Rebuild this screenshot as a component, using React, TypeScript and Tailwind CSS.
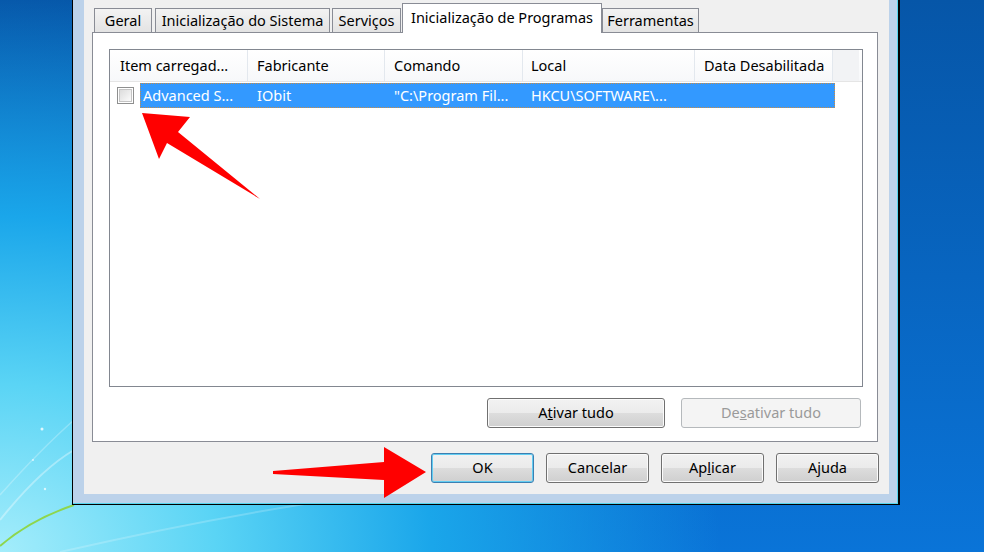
import type { ReactNode } from "react";

const uiFont = "font-['Noto_Sans',sans-serif]";

type Tab = { label: string; className: string; active?: boolean };

const tabs: Tab[] = [
  { label: "Geral", className: "ml-[2px] w-[58px]" },
  { label: "Inicialização do Sistema", className: "ml-[3px] w-[175px]" },
  { label: "Serviços", className: "ml-[2px] w-[69px]" },
  { label: "Inicialização de Programas", className: "ml-[1px] w-[200px]", active: true },
  { label: "Ferramentas", className: "w-[97px]" },
];

const columns = [
  { title: "Item carregad...", className: "w-[138px] pl-[10px]" },
  { title: "Fabricante", className: "w-[137px] pl-[9px]" },
  { title: "Comando", className: "w-[138px] pl-[9px]" },
  { title: "Local", className: "w-[172px] pl-[8px]" },
  { title: "Data Desabilitada", className: "w-[138px] pl-[9px]" },
];

function TabButton({ tab }: { tab: Tab }) {
  if (tab.active) {
    return (
      <div
        className={`${tab.className} flex h-[30px] items-center justify-center border border-b-0 border-[#898c95] bg-white pb-[2px] text-[14.5px] text-black`}
      >
        {tab.label}
      </div>
    );
  }
  return (
    <div
      className={`${tab.className} mb-px flex h-[24px] items-center justify-center border border-b-0 border-[#898c95] bg-[linear-gradient(to_bottom,#f3f3f3,#e3e3e3)] pt-[1px] text-[14.5px] text-black`}
    >
      {tab.label}
    </div>
  );
}

function WinButton({
  children,
  kind = "normal",
  className = "",
}: {
  children: ReactNode;
  kind?: "normal" | "default" | "disabled";
  className?: string;
}) {
  if (kind === "disabled") {
    return (
      <div
        className={`${className} flex h-[30px] items-center justify-center rounded-[3px] border border-[#b5b9bc] bg-[#f4f4f4] text-[14.5px] text-[#9a9a9a]`}
      >
        {children}
      </div>
    );
  }
  if (kind === "default") {
    return (
      <div
        className={`${className} flex h-[30px] items-center justify-center rounded-[3px] border border-[#3c7fb1] bg-[linear-gradient(to_bottom,#f2f2f2_0%,#ebebeb_50%,#dddddd_50%,#cfcfcf_100%)] text-[14.5px] text-black shadow-[inset_0_0_0_1px_#62cdf2]`}
      >
        {children}
      </div>
    );
  }
  return (
    <div
      className={`${className} flex h-[30px] items-center justify-center rounded-[3px] border border-[#707070] bg-[linear-gradient(to_bottom,#f2f2f2_0%,#ebebeb_50%,#dddddd_50%,#cfcfcf_100%)] text-[14.5px] text-black shadow-[inset_0_0_0_1px_#fbfbfb]`}
    >
      {children}
    </div>
  );
}

function CheckBox() {
  return (
    <div className="ml-[7px] flex h-[17px] w-[17px] items-center justify-center border border-[#8e8f8f] bg-white">
      <div className="h-[13px] w-[13px] border border-[#c4c4c4] bg-[linear-gradient(to_bottom_right,#dcdcdc,#fbfbfb)]" />
    </div>
  );
}

function StartupList() {
  return (
    <div className="h-[338px] w-[754px] border border-[#828790] bg-white">
      <div className="flex h-[32px] border-b border-[#e5e5e5] bg-[linear-gradient(to_bottom,#ffffff,#f7f8fa)]">
        {columns.map((col) => (
          <div
            key={col.title}
            className={`${col.className} flex items-center border-r border-[#e3e8ee] text-[14.5px] text-black`}
          >
            {col.title}
          </div>
        ))}
        <div className="w-[26px] bg-[#f2f3f5]" />
      </div>

      <div className="mt-[1px] flex h-[25px] items-center">
        <div className="w-[30px]">
          <CheckBox />
        </div>
        <div className="flex h-full w-[695px] items-center border border-dotted border-[#c98b45] bg-[#3399ff] text-[14.5px] text-white">
          <div className="w-[107px] pl-[2px]">Advanced S...</div>
          <div className="w-[137px] pl-[9px]">IObit</div>
          <div className="w-[138px] pl-[9px]">"C:\Program Fil...</div>
          <div className="w-[172px] pl-[8px]">HKCU\SOFTWARE\...</div>
        </div>
      </div>
    </div>
  );
}

function Desktop() {
  return (
    <svg className="absolute inset-0" width="984" height="552" viewBox="0 0 984 552">
      <path d="M0 546 Q 30 520 74 505" stroke="#8ed64c" strokeWidth="2" fill="none" />
      <path d="M0 520 Q 40 470 74 450" stroke="#ffffff" strokeOpacity="0.35" strokeWidth="2" fill="none" />
      <path d="M0 495 Q 40 450 74 420" stroke="#ffffff" strokeOpacity="0.25" strokeWidth="1.5" fill="none" />
      <path d="M60 552 Q 200 520 330 500" stroke="#ffffff" strokeOpacity="0.2" strokeWidth="2" fill="none" />
      <circle cx="42" cy="429" r="1.5" fill="#ffffff" fillOpacity="0.8" />
      <circle cx="33" cy="460" r="1" fill="#ffffff" fillOpacity="0.7" />
      <circle cx="45" cy="489" r="1.2" fill="#ffffff" fillOpacity="0.7" />
    </svg>
  );
}

function Pointers() {
  return (
    <svg
      className="pointer-events-none absolute inset-0"
      width="984"
      height="552"
      viewBox="0 0 984 552"
    >
      <polygon
        points="142,113 190,117 178,132 260,199 167,143 159,159"
        fill="#ff0000"
      />
      <polygon
        points="273,471 384,462 384,447 426,472 384,498 384,480 273,474"
        fill="#ff0000"
      />
    </svg>
  );
}

export default function App() {
  return (
    <div
      className={`${uiFont} relative h-[552px] w-[984px] overflow-hidden bg-[radial-gradient(ellipse_720px_560px_at_0%_100%,#a4edfb_0%,#5ad4f5_30%,#1aa6ea_60%,rgba(8,110,210,0)_100%),linear-gradient(to_bottom,#0656a8,#0a74d8)]`}
    >
      <Desktop />

      <div className="absolute left-[72px] top-0 w-[828px] border-b border-l border-r-2 border-black">
        <div className="border-b border-r border-[#56d6ee] bg-[#bcd2ea] pb-[9px] pl-[11px] pr-[8px]">
          <div className="h-[494px] w-[805px] bg-[#f0f0f0] pl-[8px] pt-[3px]">
            <div className="relative z-10 -mb-px flex h-[30px] items-end">
              {tabs.map((tab) => (
                <TabButton key={tab.label} tab={tab} />
              ))}
            </div>

            <div className="flex h-[410px] w-[786px] flex-col border border-[#898c95] bg-white px-[16px] pt-[16px]">
              <StartupList />
              <div className="mt-[11px] flex justify-end gap-[16px]">
                <WinButton className="w-[178px]">
                  A<span className="underline">t</span>ivar tudo
                </WinButton>
                <WinButton kind="disabled" className="w-[180px]">
                  De<span className="underline">s</span>ativar tudo
                </WinButton>
              </div>
            </div>

            <div className="mt-[11px] flex justify-end gap-[12px] pr-[10px]">
              <WinButton kind="default" className="w-[103px]">
                OK
              </WinButton>
              <WinButton className="w-[103px]">Cancelar</WinButton>
              <WinButton className="w-[103px]">
                Ap<span className="underline">l</span>icar
              </WinButton>
              <WinButton className="w-[103px]">Ajuda</WinButton>
            </div>
          </div>
        </div>
      </div>

      <Pointers />
    </div>
  );
}
